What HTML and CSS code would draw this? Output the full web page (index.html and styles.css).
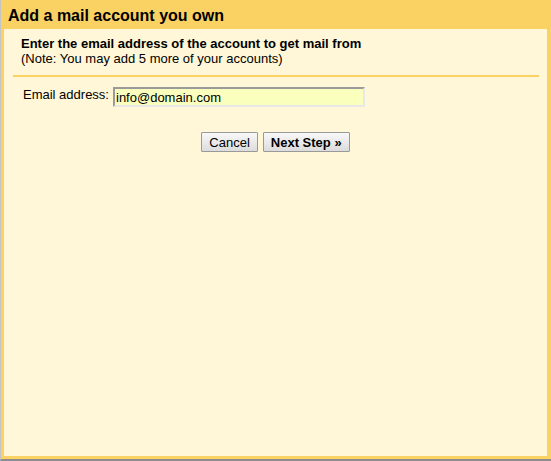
FILE: index.html
```html
<!DOCTYPE html>
<html>
<head>
<meta charset="utf-8">
<link rel="stylesheet" href="styles.css">
</head>
<body>
<div class="frame">
  <div class="title">Add a mail account you own</div>
  <div class="content">
    <div class="intro">
      <div class="intro-strong">Enter the email address of the account to get mail from</div>
      <div>(Note: You may add 5 more of your accounts)</div>
    </div>
    <div class="sep"></div>
    <div class="row">
      <label class="label" for="email">Email address:</label>
      <input class="input" id="email" type="text" value="info@domain.com">
    </div>
    <div class="buttons">
      <button class="btn">Cancel</button>
      <button class="btn btn-strong">Next Step »</button>
    </div>
  </div>
</div>
</body>
</html>
```

FILE: styles.css
```css
html, body {
  margin: 0;
  padding: 0;
}
body {
  font-family: "Liberation Sans", Arial, sans-serif;
  font-size: 13px;
  color: #000;
}
.frame {
  box-sizing: border-box;
  height: 461px;
  background: #fad163;
  border-left: 1px solid #c4c4c4;
  border-bottom: 2px solid #8c8c8c;
  padding: 0 4px 3px 3px;
  display: flex;
  flex-direction: column;
}
.title {
  height: 29px;
  box-sizing: border-box;
  padding: 2px 0 0 4px;
  line-height: 27px;
  font-size: 16px;
  font-weight: bold;
  color: #000;
}
.content {
  flex: 1;
  background: #fff7d7;
  padding: 7px 8px 0 9px;
}
.intro {
  padding-left: 8px;
  line-height: 15px;
}
.intro-strong {
  font-weight: bold;
}
.sep {
  height: 2px;
  background: #fad163;
  margin-top: 9px;
}
.row {
  display: flex;
  align-items: flex-start;
  margin-top: 10px;
  padding-left: 10px;
}
.label {
  width: 90px;
  line-height: 15px;
}
.input {
  box-sizing: border-box;
  width: 252px;
  height: 20px;
  margin: 0;
  padding: 0 1px;
  border: 2px solid;
  border-color: #9a9a9a #e8e8e8 #e8e8e8 #9a9a9a;
  background: #faffbd;
  font-family: "Liberation Sans", Arial, sans-serif;
  font-size: 13px;
  color: #000;
  outline: none;
}
.buttons {
  display: flex;
  justify-content: center;
  gap: 5px;
  margin-top: 25px;
  margin-left: -9px;
  margin-right: -8px;
}
.btn {
  box-sizing: border-box;
  height: 20px;
  margin: 0;
  padding: 1px 7px 0;
  border: 1px solid #999;
  border-radius: 1px;
  background: linear-gradient(#f8f8f8, #dcdcdc);
  font-family: "Liberation Sans", Arial, sans-serif;
  font-size: 13px;
  line-height: 16px;
  color: #000;
}
.btn-strong {
  font-weight: bold;
}
```
